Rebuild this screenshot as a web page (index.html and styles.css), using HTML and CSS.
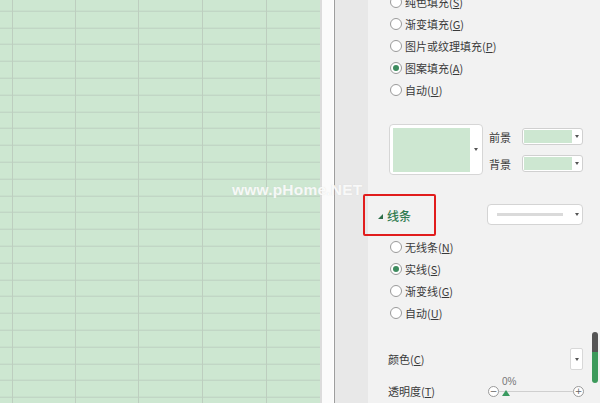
FILE: index.html
```html
<!DOCTYPE html>
<html lang="zh">
<head>
<meta charset="utf-8">
<link rel="stylesheet" href="styles.css">
</head>
<body>
<div class="app">
  <div class="sheet">
    <div class="col c0"></div>
    <div class="col c1"></div>
    <div class="col c2"></div>
    <div class="col c3"></div>
    <div class="col c4"></div>
    <div class="col c5"></div>
  </div>
  <div class="splitter"></div>
  <div class="gutter"></div>
  <div class="panel">
    <div class="radios first">
      <div class="radio"><span class="dot"></span><span>纯色填充(<u>S</u>)</span></div>
      <div class="radio"><span class="dot"></span><span>渐变填充(<u>G</u>)</span></div>
      <div class="radio"><span class="dot"></span><span>图片或纹理填充(<u>P</u>)</span></div>
      <div class="radio"><span class="dot on"></span><span>图案填充(<u>A</u>)</span></div>
      <div class="radio"><span class="dot"></span><span>自动(<u>U</u>)</span></div>
    </div>

    <div class="pattern">
      <div class="pbox"><div class="pswatch"></div><span class="caret"></span></div>
      <div class="fgbg">
        <span class="lbl">前景</span>
        <div class="mini"><div class="mswatch"></div><span class="caret"></span></div>
        <span class="lbl">背景</span>
        <div class="mini"><div class="mswatch"></div><span class="caret"></span></div>
      </div>
    </div>

    <div class="header">
      <span class="tri"></span><span class="htext">线条</span>
      <div class="linesel"><div class="lsample"></div><span class="caret"></span></div>
      <div class="redbox"></div>
    </div>

    <div class="radios">
      <div class="radio"><span class="dot"></span><span>无线条(<u>N</u>)</span></div>
      <div class="radio"><span class="dot on"></span><span>实线(<u>S</u>)</span></div>
      <div class="radio"><span class="dot"></span><span>渐变线(<u>G</u>)</span></div>
      <div class="radio"><span class="dot"></span><span>自动(<u>U</u>)</span></div>
    </div>

    <div class="row color">
      <span class="lbl">颜色(<u>C</u>)</span>
      <div class="csel"><span class="caret"></span></div>
    </div>
    <div class="row trans">
      <span class="lbl">透明度(<u>T</u>)</span>
      <div class="slider">
        <span class="circ">−</span>
        <div class="track"><span class="pct">0%</span><span class="thumb"></span></div>
        <span class="circ">+</span>
      </div>
    </div>
    <div class="scroll"></div>
  </div>
  <div class="watermark">www.pHome.NET</div>
</div>
</body>
</html>
```
FILE: styles.css
```css
* { box-sizing: border-box; }
html, body { margin: 0; padding: 0; }
body {
  width: 600px; height: 403px; overflow: hidden;
  font-family: "Noto Sans CJK SC", "Noto Sans", sans-serif;
  font-size: 11px; color: #3a3a3a;
}
.app { position: relative; display: flex; width: 600px; height: 403px; overflow: hidden; }

.sheet {
  width: 320px; flex: none; display: flex;
  background-color: #cde7d1;
  background-image: repeating-linear-gradient(to bottom, transparent 0 15.8px, #bccfc0 15.8px 16.8px);
  background-position: 0 -5.3px;
}
.col { border-right: 1px solid #bdcebf; flex: none; }
.c0 { width: 13px; }
.c1 { width: 63px; }
.c2 { width: 63px; }
.c3 { width: 64px; }
.c4 { width: 64px; }
.c5 { flex: 1; border-right: none; }

.splitter {
  width: 15px; flex: none; background: #fbfbfb;
  border-left: 2px solid #dcdcdc; border-right: 1px solid #9e9e9e;
  box-shadow: inset -1px 0 0 #ffffff;
}
.gutter { width: 33px; flex: none; background: #e8e8e8; }
.panel {
  position: relative; flex: 1; background: #f2f2f2;
  padding: 0 17px 0 0;
}

.radios { display: flex; flex-direction: column; padding-left: 22px; }
.radios.first { margin-top: -9px; }
.radio { height: 22px; display: flex; align-items: center; gap: 3px; }
.dot {
  width: 12px; height: 12px; border-radius: 50%;
  border: 1px solid #9a9a9a; background: #fff; flex: none;
  display: flex; align-items: center; justify-content: center;
}
.dot.on::after {
  content: ""; width: 6px; height: 6px; border-radius: 50%; background: #3d8b5e;
}
u { text-decoration: underline; text-underline-offset: 1px; }

.caret {
  width: 0; height: 0; border-left: 2.5px solid transparent; border-right: 2.5px solid transparent;
  border-top: 3px solid #555; flex: none;
}

.pattern { margin-top: 23px; padding-left: 21px; display: flex; gap: 6px; height: 51px; }
.pbox {
  width: 94px; height: 51px; background: #fff; border: 1px solid #d6d6d6; border-radius: 4px;
  padding: 3px; display: flex; align-items: center; gap: 4px;
}
.pswatch { width: 77px; height: 44px; background: #cde7d1; }
.fgbg {
  margin-top: 4px; display: grid; grid-template-columns: 24px 61px; grid-template-rows: 17px 17px;
  row-gap: 10px; column-gap: 9px; align-items: center;
}
.lbl { font-size: 11px; color: #3a3a3a; white-space: nowrap; }
.mini {
  height: 17px; background: #fff; border: 1px solid #d0d0d0; border-radius: 3px;
  padding: 1px 3px 1px 1px; display: flex; align-items: center; justify-content: space-between;
}
.mswatch { width: 48px; height: 13px; background: #cde7d1; }

.header {
  position: relative; margin-top: 19px; height: 42px; display: flex; align-items: center;
  padding-left: 10px;
}
.tri {
  width: 0; height: 0; border-left: 5px solid transparent; border-bottom: 5px solid #2e6e49;
  margin-right: 4px; margin-top: 2px;
}
.htext { color: #2f7b50; font-size: 12px; font-weight: 500; }
.linesel {
  margin-left: auto; width: 96px; height: 21px; margin-top: -2px; background: #fff;
  border: 1px solid #d4d4d4; border-radius: 4px; display: flex; align-items: center;
  padding: 0 3px 0 9px; justify-content: space-between;
}
.lsample { width: 66px; height: 3px; background: #dadada; }
.redbox {
  position: absolute; left: -5px; top: 0; width: 73px; height: 42px;
  border: 2px solid #e11d1d; border-radius: 2px;
}

.row { display: flex; align-items: center; justify-content: space-between; padding-left: 20px; height: 22px; }
.color { margin-top: 24px; }
.csel {
  width: 13px; height: 22px; background: #fff; border: 1px solid #d8d8d8; border-radius: 2px;
  display: flex; align-items: center; justify-content: center;
}
.trans { margin-top: 10px; }
.slider { display: flex; align-items: center; width: 96px; margin-right: -1px; }
.circ {
  width: 11px; height: 11px; border-radius: 50%; border: 1px solid #9a9a9a; background: #fff;
  font-family: "DejaVu Sans", sans-serif; font-size: 9px; line-height: 9px; color: #666;
  display: flex; align-items: center; justify-content: center; flex: none;
}
.track { position: relative; flex: 1; height: 1px; background: #cfcfcf; }
.pct {
  position: absolute; left: 3px; top: -14px; font-family: "Liberation Sans", sans-serif;
  font-size: 10px; color: #777; line-height: 10px;
}
.thumb {
  position: absolute; left: 3px; top: -1px; width: 0; height: 0;
  border-left: 4px solid transparent; border-right: 4px solid transparent; border-bottom: 6px solid #3a9a60;
}

.scroll {
  position: absolute; right: 2px; top: 332px; width: 6px; height: 51px; border-radius: 3px;
  background: linear-gradient(to bottom, #555 0 20px, #3c9a5b 20px 100%);
}

.watermark {
  position: absolute; left: 232px; top: 181px; font-family: "Liberation Sans", sans-serif;
  font-weight: bold; font-size: 15.5px; color: rgba(255,255,255,0.85);
  text-shadow: 0 0 1px rgba(200,200,200,0.5);
  letter-spacing: 0.2px;
}
```
